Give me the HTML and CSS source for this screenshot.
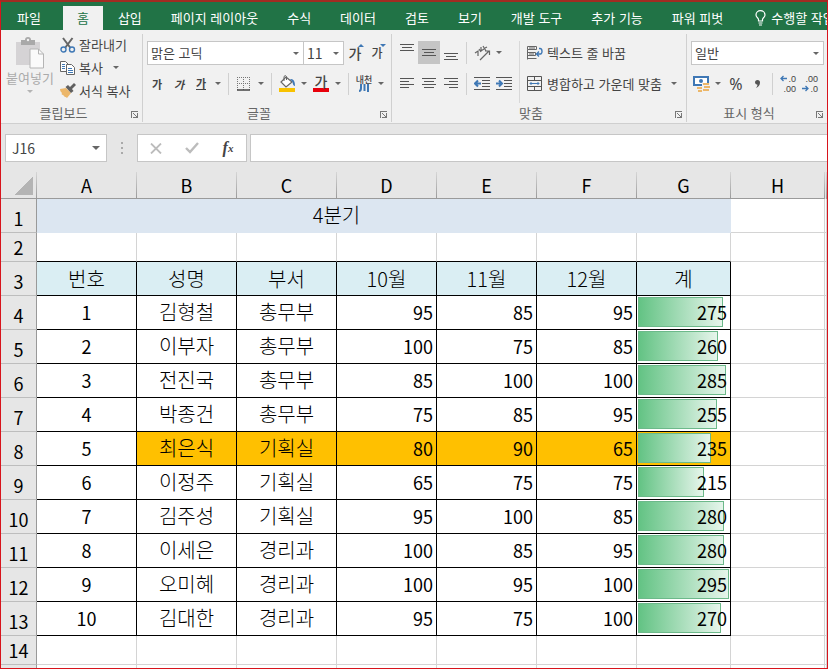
FILE: index.html
```html
<!DOCTYPE html>
<html lang="ko">

<head>
    <meta charset="UTF-8">
    <meta name="viewport" content="width=device-width, initial-scale=1.0">
    <title>4분기</title>
    <link rel="stylesheet" href="styles.css">
</head>

<body>
    <nav class="tabs">
        <button class="tab tab-file">파일</button>
        <button class="tab active">홈</button>
        <button class="tab">삽입</button>
        <button class="tab">페이지 레이아웃</button>
        <button class="tab">수식</button>
        <button class="tab">데이터</button>
        <button class="tab">검토</button>
        <button class="tab">보기</button>
        <button class="tab">개발 도구</button>
        <button class="tab">추가 기능</button>
        <button class="tab">파워 피벗</button>
        <button class="tab tell-me">
            <svg width="11" height="16" viewBox="0 0 11 16" fill="none" stroke="#fff" stroke-width="1.2"><path d="M3.5 11V9.5C3.5 8 1 7.300 1 4.900a4.500 4.300 0 0 1 9 0C10 7.300 7.500 8 7.500 9.500V11zM3.500 13h4M4 15h3"/></svg>
            수행할 작업
        </button>
    </nav>

    <div class="ribbon">
        <section class="group">
            <div class="clipboard">
                <button class="paste">
                    <svg width="28" height="32" viewBox="0 0 28 32">
                        <path d="M0 5h24v23H0z" fill="#d5d3d5"/>
                        <path d="M5 8V3h4a3 3 0 0 1 6 0h4v5z" fill="#a9a9a9"/>
                        <circle cx="12" cy="3" r="1.200" fill="#f1f1f1"/>
                        <path d="M14 12h8.500l5 5v14H14z" fill="#fafafa" stroke="#b4b4b4"/>
                        <path d="M22.500 12v5h5" fill="none" stroke="#b4b4b4"/>
                    </svg>
                    <span>붙여넣기</span>
                    <i class="arrow"></i>
                </button>
                <div class="clip-list">
                    <button class="line-btn">
                        <svg width="16" height="16" viewBox="0 0 16 16" fill="none"><path d="M3 1l7.500 10M12.500 1L5 11" stroke="#666" stroke-width="2"/><circle cx="3.500" cy="12.500" r="2.500" stroke="#3f78b5" stroke-width="1.400"/><circle cx="12" cy="12.500" r="2.500" stroke="#3f78b5" stroke-width="1.400"/></svg>
                        잘라내기
                    </button>
                    <button class="line-btn">
                        <svg width="16" height="16" viewBox="0 0 16 16" fill="#fff" stroke="#666"><path d="M.5 1.500h5l3 3v7h-8z"/><path d="M6.500 4.500h5l3 3v7h-8z"/><path d="M2 4.500h3M2 6.500h3M2 8.500h3M8 8.500h4M8 10.500h5M8 12.500h5" stroke="#3f78b5"/></svg>
                        복사
                        <i class="arrow"></i>
                    </button>
                    <button class="line-btn">
                        <svg width="16" height="16" viewBox="0 0 16 16"><path d="M0 6l6-1 5 5-4 5c-1-1-1-1-2-1-1-1-1-1-2-2-1 0-2-1-1-2C1 9 0 8 0 6z" fill="#ecb76a"/><path d="M5.500 4L8 2l2 2 4-4 2 2-4 4 1.500 2L11 10z" fill="#606060"/></svg>
                        서식 복사
                    </button>
                </div>
            </div>
            <footer class="caption">클립보드<i class="launcher"></i></footer>
        </section>

        <section class="group">
            <div class="row">
                <label class="combo combo-font"><select aria-label="글꼴"><option>맑은 고딕</option></select></label>
                <label class="combo combo-size"><select aria-label="글꼴 크기"><option>11</option></select></label>
                <button class="icon-btn grow">가<i class="tip up"></i></button>
                <button class="icon-btn shrink">가<i class="tip down"></i></button>
            </div>
            <div class="row">
                <button class="icon-btn small bold">가</button>
                <button class="icon-btn small bold italic">가</button>
                <button class="icon-btn small bold"><span class="underline">가</span></button>
                <button class="drop" aria-label="밑줄"><i class="arrow"></i></button>
                <i class="sep"></i>
                <button class="icon-btn" aria-label="테두리">
                    <svg width="14" height="14" viewBox="0 0 14 14" fill="none" stroke="#777"><path d="M.5 0v13M6.500 0v13M12.500 0v13M0 .5h13M0 6.500h13" stroke-dasharray="1 1"/><path d="M0 13h13" stroke="#444" stroke-width="1.500"/></svg>
                </button>
                <button class="drop" aria-label="테두리 종류"><i class="arrow"></i></button>
                <i class="sep"></i>
                <button class="icon-btn" aria-label="채우기 색">
                    <svg width="16" height="17" viewBox="0 0 16 17"><path d="M7 2l6 5-6 5-5-5z" fill="#fff" stroke="#666" stroke-width="1.200"/><path d="M5 6V1.500q1.500-2 2.500 0V5" fill="none" stroke="#666"/><path d="M11 4q5-1 5 7-2 0-2.500-4z" fill="#3f78b5"/><path d="M0 13h16v4H0z" fill="#f8c200"/></svg>
                </button>
                <button class="drop" aria-label="채우기 색 종류"><i class="arrow"></i></button>
                <button class="icon-btn"><span class="font-color">가</span></button>
                <button class="drop" aria-label="글꼴 색 종류"><i class="arrow"></i></button>
                <i class="sep"></i>
                <button class="icon-btn phonetic">내천
                    <svg width="10" height="8" viewBox="0 0 10 8" fill="none" stroke="#3f78b5" stroke-width="2"><path d="M2 0v4q0 3-2 3M5.500 0v7M9 0v8"/></svg>
                </button>
                <button class="drop" aria-label="윗주"><i class="arrow"></i></button>
            </div>
            <footer class="caption">글꼴<i class="launcher"></i></footer>
        </section>

        <section class="group">
            <div class="align-body">
                <div class="align-icons">
                    <div class="row">
                        <button class="icon-btn top" aria-label="위쪽 맞춤"><svg width="14" height="8" viewBox="0 0 14 8" stroke="#555"><path d="M0 .5h14M2 3.500h10M0 6.500h14"/></svg></button>
                        <button class="icon-btn pressed" aria-label="가운데 맞춤"><svg width="14" height="8" viewBox="0 0 14 8" stroke="#555"><path d="M0 .5h14M2 3.500h10M0 6.500h14"/></svg></button>
                        <button class="icon-btn bottom" aria-label="아래쪽 맞춤"><svg width="14" height="8" viewBox="0 0 14 8" stroke="#555"><path d="M0 .5h14M2 3.500h10M0 6.500h14"/></svg></button>
                        <i class="sep"></i>
                        <button class="icon-btn" aria-label="방향">
                            <svg width="17" height="16" viewBox="0 0 17 16" fill="none" stroke="#666" stroke-width="1.200"><path d="M1 8l3-2v5M5 4l2 3M6 6l2-1M7 2v4l3-2M9 1l3 5M11 3l2-1M6 15l9-9M11 6h4.500v4"/></svg>
                        </button>
                        <button class="drop" aria-label="방향 종류"><i class="arrow"></i></button>
                    </div>
                    <div class="row">
                        <button class="icon-btn" aria-label="왼쪽 맞춤"><svg width="14" height="11" viewBox="0 0 14 11" stroke="#555"><path d="M0 .5h14M0 3.500h9M0 6.500h14M0 9.500h9"/></svg></button>
                        <button class="icon-btn" aria-label="가로 가운데 맞춤"><svg width="14" height="11" viewBox="0 0 14 11" stroke="#555"><path d="M0 .5h14M2 3.500h10M0 6.500h14M2 9.500h10"/></svg></button>
                        <button class="icon-btn" aria-label="오른쪽 맞춤"><svg width="14" height="11" viewBox="0 0 14 11" stroke="#555"><path d="M0 .5h14M5 3.500h9M0 6.500h14M5 9.500h9"/></svg></button>
                        <i class="sep"></i>
                        <button class="icon-btn" aria-label="내어쓰기"><svg width="16" height="13" viewBox="0 0 16 13" fill="none" stroke="#555"><path d="M0 .5h16M8 3.500h8M8 6.500h8M8 9.500h8M0 12.500h16"/><path d="M7 6.500H2M4 3.500l-3 3 3 3" stroke="#3f78b5" stroke-width="2"/></svg></button>
                        <button class="icon-btn" aria-label="들여쓰기"><svg width="16" height="13" viewBox="0 0 16 13" fill="none" stroke="#555"><path d="M0 .5h16M8 3.500h8M8 6.500h8M8 9.500h8M0 12.500h16"/><path d="M0 6.500h5M3 3.500l3 3-3 3" stroke="#3f78b5" stroke-width="2"/></svg></button>
                    </div>
                </div>
                <div class="align-text">
                    <button class="wide-btn">
                        <svg width="16" height="16" viewBox="0 0 16 16" fill="none" stroke="#666"><path d="M.5 1.500h9v3h-9zM.5 4.500v10M.5 7.500h8v3h-8M2 3h6M2 9h5M.5 13.500h9"/><path d="M12 3.500h1q2 0 2 3t-3 2.500h-2M12 6.500L9.500 9l2.500 2.500" stroke="#3f78b5" stroke-width="1.400"/></svg>
                        텍스트 줄 바꿈
                    </button>
                    <button class="wide-btn">
                        <svg width="16" height="16" viewBox="0 0 16 16" fill="none" stroke="#555"><path d="M.5.5h14v14H.5zM.5 4.500h14M.5 10.500h14M7.500.5v4M7.500 10.500v4"/><path d="M3 7.500h9M4.500 6L3 7.500 4.500 9M10.500 6L12 7.500 10.500 9" stroke="#3f78b5"/></svg>
                        병합하고 가운데 맞춤
                        <i class="arrow"></i>
                    </button>
                </div>
            </div>
            <footer class="caption">맞춤<i class="launcher"></i></footer>
        </section>

        <section class="group group-number">
            <div class="row">
                <label class="combo combo-number"><select aria-label="표시 형식"><option>일반</option></select></label>
            </div>
            <div class="row">
                <button class="icon-btn" aria-label="회계 표시 형식">
                    <svg width="17" height="16" viewBox="0 0 17 16"><path d="M1 1h14v8H1z" fill="#fff" stroke="#3f78b5" stroke-width="2"/><path d="M6 5a2 2 0 1 0 4 0 2 2 0 1 0-4 0" fill="#3f78b5"/><path d="M9 7h8v7H9z" fill="#f1f1f1"/><path d="M10 7h6v2h-6zM11 10h6v2h-6zM10 13h6v2h-6zM4 11h5v2H4zM5 14h4v2H5z" fill="#ecb76a"/></svg>
                </button>
                <button class="drop" aria-label="통화 종류"><i class="arrow"></i></button>
                <button class="icon-btn percent">%</button>
                <button class="icon-btn comma" aria-label="쉼표 스타일"><svg width="6" height="8" viewBox="0 0 6 8"><path d="M0 2.500a2.400 2.400 0 0 1 5 0Q5 6 1 8q1.500-2 1.500-3.200Q0 4.500 0 2.500" fill="#555"/></svg></button>
                <i class="sep"></i>
                <button class="icon-btn decimal">
                    <span><svg width="7" height="7" viewBox="0 0 7 7" fill="none" stroke="#3f78b5" stroke-width="1.300"><path d="M7 3.500H1M3.500 1L1 3.500 3.500 6"/></svg>.0</span>
                    <span>.00</span>
                </button>
                <button class="icon-btn decimal">
                    <span>.00</span>
                    <span><svg width="7" height="7" viewBox="0 0 7 7" fill="none" stroke="#3f78b5" stroke-width="1.300"><path d="M0 3.500h6M3.500 1L6 3.500 3.500 6"/></svg>.0</span>
                </button>
            </div>
            <footer class="caption">표시 형식<i class="launcher"></i></footer>
        </section>
    </div>

    <div class="formula-bar">
        <label class="name-box"><input type="text" value="J16" aria-label="이름 상자"><i class="arrow"></i></label>
        <i class="dots"></i>
        <div class="formula-buttons">
            <button aria-label="취소"><svg width="12" height="11" viewBox="0 0 12 11" stroke="#bcbcbc" stroke-width="1.800"><path d="M1 .5l10 10M11 .5l-10 10"/></svg></button>
            <button aria-label="입력"><svg width="14" height="12" viewBox="0 0 14 12" fill="none" stroke="#bcbcbc" stroke-width="2.400"><path d="M1 6l4 4 8-9"/></svg></button>
            <button class="fx">f<sub>x</sub></button>
        </div>
        <input class="formula-input" type="text" aria-label="수식 입력줄">
    </div>

    <main class="sheet">
        <table>
            <colgroup>
                <col class="col-head">
                <col class="col-wide" span="6">
                <col class="col-narrow" span="2">
                <col>
            </colgroup>
            <thead>
                <tr><th class="corner"></th><th>A</th><th>B</th><th>C</th><th>D</th><th>E</th><th>F</th><th>G</th><th>H</th><th></th></tr>
            </thead>
            <tbody>
                <tr><th>1</th><td class="title" colspan="6">4분기</td><td class="title"></td><td></td><td></td></tr>
                <tr class="short above"><th>2</th><td></td><td></td><td></td><td></td><td></td><td></td><td></td><td></td><td></td></tr>
                <tr class="data heading"><th>3</th><td>번호</td><td>성명</td><td>부서</td><td>10월</td><td>11월</td><td>12월</td><td>계</td><td></td><td></td></tr>
                <tr class="data"><th>4</th><td>1</td><td>김형철</td><td>총무부</td><td>95</td><td>85</td><td>95</td><td><div class="bar-cell"><div class="bar" style="width: 93.2%"></div><span>275</span></div></td><td></td><td></td></tr>
                <tr class="data"><th>5</th><td>2</td><td>이부자</td><td>총무부</td><td>100</td><td>75</td><td>85</td><td><div class="bar-cell"><div class="bar" style="width: 88.1%"></div><span>260</span></div></td><td></td><td></td></tr>
                <tr class="data"><th>6</th><td>3</td><td>전진국</td><td>총무부</td><td>85</td><td>100</td><td>100</td><td><div class="bar-cell"><div class="bar" style="width: 96.6%"></div><span>285</span></div></td><td></td><td></td></tr>
                <tr class="data"><th>7</th><td>4</td><td>박종건</td><td>총무부</td><td>75</td><td>85</td><td>95</td><td><div class="bar-cell"><div class="bar" style="width: 86.4%"></div><span>255</span></div></td><td></td><td></td></tr>
                <tr class="data marked"><th>8</th><td>5</td><td>최은식</td><td>기획실</td><td>80</td><td>90</td><td>65</td><td><div class="bar-cell"><div class="bar" style="width: 79.7%"></div><span>235</span></div></td><td></td><td></td></tr>
                <tr class="data"><th>9</th><td>6</td><td>이정주</td><td>기획실</td><td>65</td><td>75</td><td>75</td><td><div class="bar-cell"><div class="bar" style="width: 72.9%"></div><span>215</span></div></td><td></td><td></td></tr>
                <tr class="data"><th>10</th><td>7</td><td>김주성</td><td>기획실</td><td>95</td><td>100</td><td>85</td><td><div class="bar-cell"><div class="bar" style="width: 94.9%"></div><span>280</span></div></td><td></td><td></td></tr>
                <tr class="data"><th>11</th><td>8</td><td>이세은</td><td>경리과</td><td>100</td><td>85</td><td>95</td><td><div class="bar-cell"><div class="bar" style="width: 94.9%"></div><span>280</span></div></td><td></td><td></td></tr>
                <tr class="data"><th>12</th><td>9</td><td>오미혜</td><td>경리과</td><td>100</td><td>95</td><td>100</td><td><div class="bar-cell"><div class="bar" style="width: 100%"></div><span>295</span></div></td><td></td><td></td></tr>
                <tr class="data"><th>13</th><td>10</td><td>김대한</td><td>경리과</td><td>95</td><td>75</td><td>100</td><td><div class="bar-cell"><div class="bar" style="width: 91.5%"></div><span>270</span></div></td><td></td><td></td></tr>
                <tr class="short"><th>14</th><td></td><td></td><td></td><td></td><td></td><td></td><td></td><td></td><td></td></tr>
                <tr class="short"><th></th><td></td><td></td><td></td><td></td><td></td><td></td><td></td><td></td><td></td></tr>
            </tbody>
        </table>
    </main>
</body>

</html>
```

FILE: styles.css
```css
* {
    box-sizing: border-box;
}

body {
    margin: 0;
    height: 100vh;
    display: flex;
    flex-direction: column;
    overflow: hidden;
    border: 1px solid #d8141c;
    border-top: 2px solid #a22c22;
    background-color: #e6e6e6;
    color: #444;
    font-family: "Noto Sans CJK KR", sans-serif;
    font-size: 13px;
    line-height: 20px;
}

button,
input,
select {
    margin: 0;
    padding: 0;
    border: none;
    background: none;
    color: inherit;
    font: inherit;
    outline: none;
}

svg {
    display: block;
    flex: none;
}

/* tabs */
.tabs {
    display: flex;
    flex: none;
    gap: 1px;
    height: 28px;
    padding-top: 4px;
    overflow: hidden;
    background-color: #217346;
}

.tab {
    flex: none;
    padding: 0 14px;
    color: #fff;
    white-space: nowrap;
}

.tab-file {
    padding: 0 21px 0 16px;
}

.tab.active {
    background-color: #f1f1f1;
    color: #217346;
}

.tell-me {
    display: flex;
    align-items: center;
    gap: 5px;
    padding-left: 17px;
}

/* ribbon */
.ribbon {
    display: flex;
    flex: none;
    height: 94px;
    padding-top: 4px;
    overflow: hidden;
    background-color: #f1f1f1;
    border-bottom: 1px solid #cfcfcf;
}

.group {
    display: flex;
    flex-direction: column;
    flex: none;
    height: 88px;
    padding: 7px 3px 0;
    border-right: 1px solid #d0d0d0;
}

.group-number {
    flex: 1;
    border-right: none;
}

.row {
    display: flex;
    align-items: center;
    height: 23px;
    margin-bottom: 8px;
}

.caption {
    display: flex;
    align-items: center;
    justify-content: center;
    position: relative;
    margin-top: auto;
    padding-right: 16px;
    color: #666;
    line-height: 18px;
}

.launcher {
    position: absolute;
    right: 1px;
    bottom: 4px;
    width: 7px;
    height: 7px;
    border-left: 1px solid #777;
    border-top: 1px solid #777;
}

.launcher::after {
    content: "";
    position: absolute;
    right: 0;
    bottom: 0;
    width: 4px;
    height: 4px;
    border-right: 1px solid #777;
    border-bottom: 1px solid #777;
    background: linear-gradient(45deg, transparent 40%, #777 40%, #777 60%, transparent 60%);
}

.arrow {
    flex: none;
    border: 3px solid transparent;
    border-top-color: #666;
    border-bottom: none;
}

.icon-btn {
    display: flex;
    align-items: center;
    justify-content: center;
    position: relative;
    flex: none;
    width: 22px;
    height: 23px;
}

.drop {
    display: flex;
    align-items: center;
    justify-content: center;
    flex: none;
    width: 12px;
    height: 23px;
}

.sep {
    flex: none;
    width: 1px;
    height: 22px;
    margin: 0 4px;
    background-color: #d0d0d0;
}

.pressed {
    background-color: #c5c5c5;
}

.top {
    align-items: flex-start;
    padding-top: 3px;
}

.bottom {
    align-items: flex-end;
    padding-bottom: 3px;
}

/* clipboard */
.clipboard {
    display: flex;
    margin-top: -8px;
}

.paste {
    display: flex;
    flex-direction: column;
    align-items: center;
    width: 52px;
    padding: 4px 0 0;
    color: #aaa;
}

.paste span {
    line-height: 18px;
}

.paste .arrow {
    margin-top: 3px;
    border-top-color: #b4b4b4;
}

.clip-list {
    width: 83px;
    padding-left: 4px;
}

.line-btn {
    display: flex;
    align-items: center;
    gap: 3px;
    height: 23px;
    white-space: nowrap;
}

.line-btn .arrow {
    margin-left: 7px;
}

/* font */
.combo {
    display: block;
    position: relative;
    height: 24px;
    background-color: #fff;
    border: 1px solid #c6c6c6;
}

.combo::after {
    content: "";
    position: absolute;
    right: 4px;
    top: 10px;
    border: 3px solid transparent;
    border-top-color: #666;
    border-bottom: none;
}

.combo select {
    display: block;
    width: 100%;
    height: 22px;
    padding-left: 3px;
    appearance: none;
}

.combo-font {
    width: 157px;
    margin-left: 1px;
}

.combo-size {
    width: 41px;
    margin-left: -1px;
}

.combo-size select {
    font-size: 14px;
}

.combo-number {
    flex: 1;
    margin-left: 1px;
}

.grow {
    font-size: 14px;
    font-weight: 500;
}

.shrink {
    font-size: 12px;
    font-weight: 500;
}

.tip {
    position: absolute;
    right: 2px;
    top: 3px;
    border: 3px solid transparent;
}

.up {
    border-bottom-color: #3f78b5;
    border-top: none;
}

.down {
    border-top-color: #3f78b5;
    border-bottom: none;
}

.small {
    font-size: 11px;
}

.bold {
    font-weight: bold;
}

.italic {
    font-style: italic;
}

.underline {
    border-bottom: 1px solid #444;
    line-height: 12px;
}

.font-color {
    width: 16px;
    border-bottom: 4px solid #e8000b;
    font-size: 14px;
    font-weight: 500;
    line-height: 13px;
}

.phonetic {
    flex-direction: column;
    font-size: 9px;
    font-weight: 500;
    line-height: 9px;
    white-space: nowrap;
}

/* alignment */
.align-body {
    display: flex;
}

.align-icons {
    padding: 0 4px 0 1px;
}

.align-text {
    display: flex;
    flex-direction: column;
    gap: 8px;
    width: 164px;
    padding: 0 6px 0 7px;
    border-left: 1px solid #d8d8d8;
}

.wide-btn {
    display: flex;
    align-items: center;
    gap: 4px;
    height: 23px;
    white-space: nowrap;
}

.wide-btn .arrow {
    margin-left: auto;
}

/* number */
.percent {
    width: 24px;
    font-family: "Noto Sans", sans-serif;
    font-size: 16px;
}

.comma {
    width: 20px;
}

.decimal {
    flex-direction: column;
    align-items: flex-end;
    padding-right: 3px;
    font-family: "Liberation Sans", sans-serif;
    font-size: 9px;
    line-height: 10px;
}

.decimal span {
    display: flex;
    align-items: center;
    gap: 1px;
}

/* formula bar */
.formula-bar {
    display: flex;
    flex: none;
    height: 48px;
    padding: 10px 0 10px 4px;
}

.name-box {
    display: flex;
    align-items: center;
    width: 102px;
    padding: 0 6px;
    background-color: #fff;
    border: 1px solid #c6c6c6;
}

.name-box input {
    flex: 1;
    min-width: 0;
    font-size: 14px;
}

.name-box .arrow {
    border-width: 4px 4px 0;
}

.dots {
    width: 2px;
    margin: 8px 14px;
    background: repeating-linear-gradient(#aaa 0 2px, transparent 2px 5px);
}

.formula-buttons {
    display: flex;
    width: 110px;
    background-color: #fff;
    border: 1px solid #c6c6c6;
}

.formula-buttons button {
    display: flex;
    flex: 1;
    align-items: center;
    justify-content: center;
}

.fx {
    font-family: "Liberation Serif", serif;
    font-size: 16px;
    font-style: italic;
    font-weight: bold;
}

.fx sub {
    font-size: 11px;
}

.formula-input {
    flex: 1;
    min-width: 0;
    margin-left: 3px;
    padding: 0 6px;
    background-color: #fff;
    border: 1px solid #c6c6c6;
    border-right: none;
}

/* sheet */
.sheet {
    flex: 1;
    min-height: 0;
    overflow: hidden;
    background-color: #fff;
}

table {
    width: 100%;
    table-layout: fixed;
    border-spacing: 0;
    color: #000;
    font-size: 20px;
    font-weight: 300;
    line-height: 24px;
}

.col-head {
    width: 36px;
}

.col-wide {
    width: 100px;
}

.col-narrow {
    width: 94px;
}

th,
td {
    padding: 0;
    border-right: 1px solid #d4d4d4;
    border-bottom: 1px solid #d4d4d4;
    text-align: center;
    white-space: nowrap;
}

td {
    padding-bottom: 1px;
}

th {
    background-color: #e6e6e6;
    font-size: 18px;
    font-weight: 400;
}

thead th {
    height: 27px;
    border-image: linear-gradient(#d8d8d8, #999) 1;
}

thead .corner {
    background: linear-gradient(to bottom right, transparent 50%, #b4b4b4 50%) 13px 5px / 19px 18px no-repeat #e6e6e6;
}

tbody tr {
    height: 34px;
}

tbody .short {
    height: 29px;
}

tbody th {
    padding-top: 4px;
    border-right-color: #999;
    border-bottom-color: #bdbdbd;
}

.short th {
    padding-top: 0;
}

.title {
    background-color: #dce6f1;
    border-color: #dce6f1;
}

.above td:nth-child(-n+8) {
    border-bottom-color: #000;
}

.data td:nth-child(-n+8) {
    border-color: #000;
}

.data td:nth-child(2),
.data td:nth-child(n+5) {
    font-size: 18px;
    font-weight: 400;
}

.data td:nth-child(n+5) {
    padding-right: 3px;
    text-align: right;
}

.data td:nth-child(8) {
    padding: 0;
}

.heading td:nth-child(-n+8) {
    padding: 0;
    background-color: #daeef3;
    font-size: 20px;
    font-weight: 300;
    text-align: center;
}

.marked td:nth-child(n+3):nth-child(-n+8) {
    background-color: #ffc000;
}

/* data bars */
.bar-cell {
    position: relative;
    height: 33px;
    margin: 0 1px;
    padding-right: 2px;
    line-height: 32px;
}

.bar {
    position: absolute;
    left: 0;
    top: 1px;
    bottom: 2px;
    background: linear-gradient(to right, #63c384, #e6f5eb);
    border: 1px solid #6cb98a;
}

.bar-cell span {
    position: relative;
}
```
